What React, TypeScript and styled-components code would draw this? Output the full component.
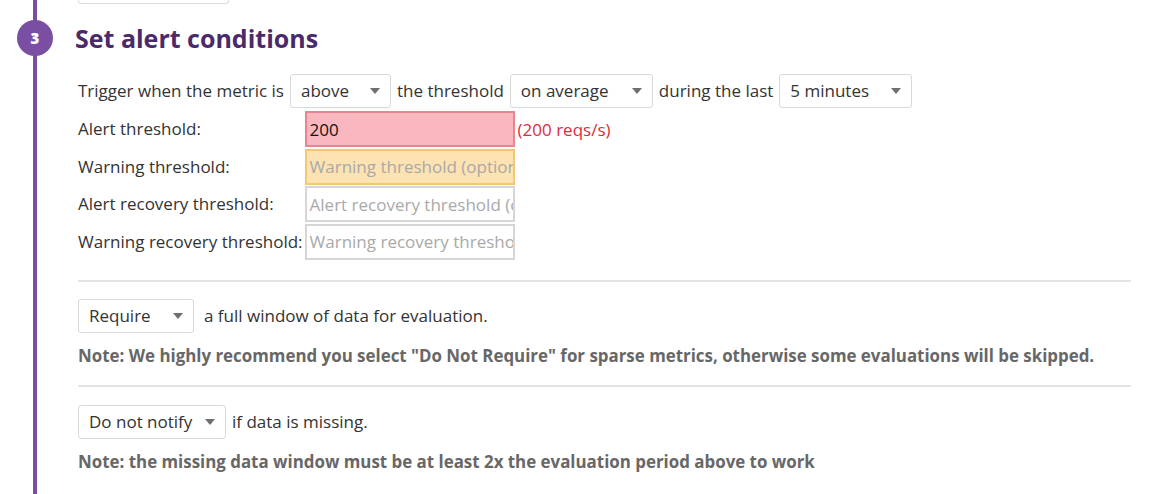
import React from 'react';
import styled, { createGlobalStyle } from 'styled-components';

const GlobalStyle = createGlobalStyle`
  html, body {
    margin: 0;
    padding: 0;
    background: #fff;
  }
  body {
    font-family: "Open Sans", "Liberation Sans", sans-serif;
    color: #333;
    font-size: 17px;
  }
`;

const Caret = () => (
  <svg width="10" height="6" viewBox="0 0 10 6">
    <polygon points="0,0 10,0 5,6" fill="#6f6f6f" />
  </svg>
);

interface SelectProps {
  value: string;
  width: number;
}

const Select: React.FC<SelectProps> = ({ value, width }) => (
  <SelectBox style={{ width }}>
    <span>{value}</span>
    <Caret />
  </SelectBox>
);

const thresholds = [
  { label: 'Alert threshold:', value: '200', placeholder: '', tone: 'alert', hint: '(200 reqs/s)' },
  { label: 'Warning threshold:', value: '', placeholder: 'Warning threshold (optional)', tone: 'warning' },
  { label: 'Alert recovery threshold:', value: '', placeholder: 'Alert recovery threshold (optional)', tone: 'plain' },
  { label: 'Warning recovery threshold:', value: '', placeholder: 'Warning recovery threshold (optional)', tone: 'plain' },
];

const App: React.FC = () => {
  return (
    <>
      <GlobalStyle />
      <Page>
        <Rail>
          <StepNumber>3</StepNumber>
        </Rail>
        <Content>
          <PrevBox />
          <Title>Set alert conditions</Title>

          <Line>
            <span>Trigger when the metric is</span>
            <Select value="above" width={101} />
            <span>the threshold</span>
            <Select value="on average" width={143} />
            <span>during the last</span>
            <Select value="5 minutes" width={133} />
          </Line>

          <ThresholdGrid>
            {thresholds.map((t) => (
              <React.Fragment key={t.label}>
                <Label>{t.label}</Label>
                <Input tone={t.tone}>
                  {t.value ? <Value>{t.value}</Value> : <Placeholder>{t.placeholder}</Placeholder>}
                </Input>
                <Hint>{t.hint}</Hint>
              </React.Fragment>
            ))}
          </ThresholdGrid>

          <Divider />

          <Line top={17}>
            <Select value="Require" width={116} />
            <Text>a full window of data for evaluation.</Text>
          </Line>
          <Note>
            Note: We highly recommend you select "Do Not Require" for sparse metrics, otherwise some
            evaluations will be skipped.
          </Note>

          <Divider top={18} />

          <Line top={18}>
            <Select value="Do not notify" width={148} />
            <span>if data is missing.</span>
          </Line>
          <Note>Note: the missing data window must be at least 2x the evaluation period above to work</Note>
        </Content>
      </Page>
    </>
  );
};

const Page = styled.div`
  display: flex;
  width: 1150px;
  height: 494px;
  overflow: hidden;
`;

const Rail = styled.div`
  width: 75px;
  flex-shrink: 0;
  padding-left: 17px;
  box-sizing: border-box;
  background: linear-gradient(
    to right,
    transparent 33px,
    #7a4ea3 33px,
    #7a4ea3 37px,
    transparent 37px
  );
`;

const StepNumber = styled.div`
  width: 36px;
  height: 36px;
  margin-top: 20px;
  border-radius: 50%;
  background: #7a4ea3;
  color: #fff;
  font-weight: 800;
  font-size: 15px;
  display: flex;
  align-items: center;
  justify-content: center;
`;

const Content = styled.div`
  flex: 1;
  padding-right: 19px;
  display: flex;
  flex-direction: column;
`;

const PrevBox = styled.div`
  width: 149px;
  height: 3px;
  margin-left: 3px;
  border: 1px solid #dcdcdc;
  border-top: none;
  border-radius: 0 0 3px 3px;
`;

const Title = styled.h2`
  margin: 16px 0 0;
  font-size: 25px;
  line-height: 36px;
  font-weight: 700;
  color: #4a2a69;
`;

const Line = styled.div<{ top?: number }>`
  display: flex;
  align-items: center;
  gap: 6px;
  margin-top: ${(p) => p.top ?? 18}px;
  margin-left: 3px;
  line-height: 22px;
`;

const Text = styled.span`
  margin-left: 4px;
`;

const SelectBox = styled.div`
  height: 34px;
  box-sizing: border-box;
  border: 1px solid #d9d9d9;
  border-radius: 3px;
  padding: 0 10px 0 10px;
  display: flex;
  align-items: center;
  justify-content: space-between;
  color: #333;
  background: #fff;
`;

const ThresholdGrid = styled.div`
  display: grid;
  grid-template-columns: max-content 210px max-content;
  row-gap: 1.5px;
  column-gap: 2px;
  margin-top: 3px;
  margin-left: 3px;
  align-items: center;
`;

const Label = styled.span`
  line-height: 22px;
`;

const toneStyles: Record<string, { bg: string; border: string }> = {
  alert: { bg: '#f9b8bf', border: '#e8858f' },
  warning: { bg: '#fde2b2', border: '#f4c873' },
  plain: { bg: '#fff', border: '#d6d6d6' },
};

const Input = styled.div<{ tone: string }>`
  height: 36px;
  box-sizing: border-box;
  border: 2px solid ${(p) => toneStyles[p.tone].border};
  background: ${(p) => toneStyles[p.tone].bg};
  padding-left: 3px;
  display: flex;
  align-items: center;
  overflow: hidden;
  white-space: nowrap;
`;

const Value = styled.span`
  color: #111;
`;

const Placeholder = styled.span`
  color: #a9a9a9;
`;

const Hint = styled.span`
  color: #dc2a3e;
  margin-left: 1px;
`;

const Divider = styled.div<{ top?: number }>`
  height: 2px;
  background: #e4e4e4;
  margin-top: ${(p) => p.top ?? 20}px;
  margin-left: 3px;
`;

const Note = styled.p`
  margin: 12px 0 0 3px;
  font-size: 16.9px;
  line-height: 22px;
  font-weight: 700;
  color: #676767;
`;

export default App;
